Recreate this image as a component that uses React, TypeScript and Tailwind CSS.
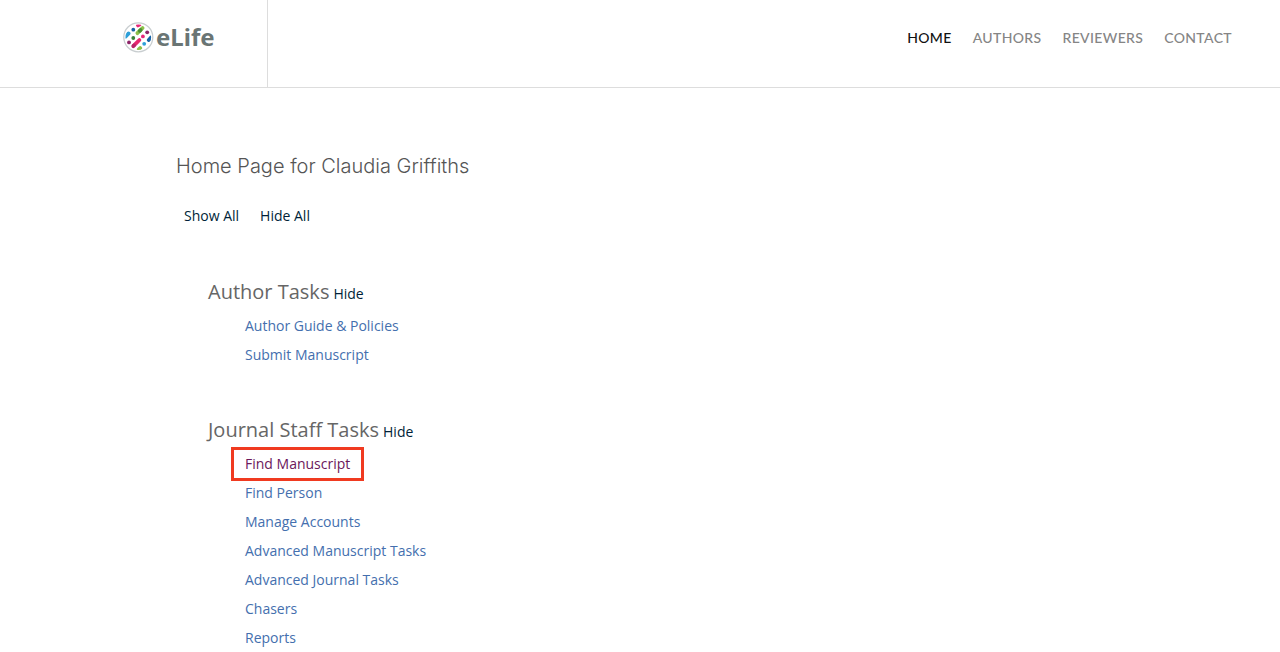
import { useState } from "react";

const navItems = ["HOME", "AUTHORS", "REVIEWERS", "CONTACT"];

type Section = { title: string; links: string[]; highlighted?: string };

const sections: Section[] = [
  { title: "Author Tasks", links: ["Author Guide & Policies", "Submit Manuscript"] },
  {
    title: "Journal Staff Tasks",
    highlighted: "Find Manuscript",
    links: [
      "Find Manuscript",
      "Find Person",
      "Manage Accounts",
      "Advanced Manuscript Tasks",
      "Advanced Journal Tasks",
      "Chasers",
      "Reports",
    ],
  },
];

function LogoMark() {
  return (
    <svg viewBox="0 0 32 32" className="size-8 shrink-0" fill="none" strokeLinecap="round" aria-hidden="true">
      <defs>
        <clipPath id="disc">
          <circle cx="16.3" cy="16.3" r="12.8" />
        </clipPath>
      </defs>
      <circle cx="16.3" cy="16.3" r="14.5" fill="#fff" stroke="#c9ced0" strokeWidth="1.3" />
      <g clipPath="url(#disc)" strokeWidth="3.8">
        <path d="M16 4.4 17.5 3.6" stroke="#e6287a" />
        <path d="M15.4 12.2 20.6 7" stroke="#8cc04b" />
        <path d="M17.8 9.8 18.6 9" stroke="#4b8f35" />
        <path d="M3.5 15.8 6.6 12.4" stroke="#2d9fd8" />
        <path d="M12 24.4 17.4 19" stroke="#e6286f" />
        <path d="M11.2 25.2 12 24.4" stroke="#b72568" />
        <path d="M26.8 19 29 16.5" stroke="#1762a5" />
        <path d="M16.8 28.4 18.2 27" stroke="#8cc04b" />
      </g>
      <circle cx="11.3" cy="8.7" r="1.9" fill="#1762a5" />
      <circle cx="25.2" cy="11.3" r="1.9" fill="#8d2468" />
      <circle cx="20.9" cy="15.4" r="1.9" fill="#e6287a" />
      <circle cx="11.3" cy="17" r="1.9" fill="#39803b" />
      <circle cx="7" cy="21.4" r="1.9" fill="#8d2468" />
      <circle cx="22.2" cy="22.8" r="1.9" fill="#2d9fd8" />
    </svg>
  );
}

function TaskSection({ section, open, onToggle }: { section: Section; open: boolean; onToggle: () => void }) {
  return (
    <section>
      <div className="flex h-[34px] items-baseline gap-1">
        <h2 className="text-xl leading-[30px] text-[#666]">{section.title}</h2>
        <button type="button" onClick={onToggle} aria-expanded={open} className="text-sm text-[#001f38]">
          {open ? "Hide" : "Show"}
        </button>
      </div>
      {open && (
        <ul className="pl-[37px]">
          {section.links.map((link) => (
            <li key={link} className="flex h-[29px] items-center">
              {link === section.highlighted ? (
                <a href="#" className="relative text-sm text-[#6b175b]">
                  {link}
                  <span className="absolute -inset-x-[14px] -inset-y-[7px] border-3 border-[#f03a20]" />
                </a>
              ) : (
                <a href="#" className="text-sm text-[#446fae]">
                  {link}
                </a>
              )}
            </li>
          ))}
        </ul>
      )}
    </section>
  );
}

export default function App() {
  const [open, setOpen] = useState<boolean[]>(sections.map(() => true));

  return (
    <div className="min-h-screen bg-white font-['Open_Sans',sans-serif]">
      <header className="flex h-[88px] border-b border-[#ddd]">
        <div className="flex w-[268px] shrink-0 items-start border-r border-[#ddd] pt-[21px] pl-[122px]">
          <a href="#" className="flex items-center gap-0.5 text-[#6a7574]">
            <LogoMark />
            <span className="font-['Noto_Sans',sans-serif] text-2xl leading-8 font-bold">eLife</span>
          </a>
        </div>
        <nav className="flex grow items-start justify-end gap-[21px] pt-7 pr-12 font-['Lato',sans-serif] text-sm font-medium tracking-wide">
          {navItems.map((item, i) => (
            <a key={item} href="#" className={i === 0 ? "text-[#111]" : "text-[#858585]"}>
              {item}
            </a>
          ))}
        </nav>
      </header>

      <main className="pt-[62px] pl-44">
        <h1 className="font-['Inter',sans-serif] text-xl leading-8 font-light text-[#555]">
          Home Page for Claudia Griffiths
        </h1>
        <div className="mt-6 flex gap-[21px] pl-2 text-sm text-[#001f38]">
          <button type="button" onClick={() => setOpen(sections.map(() => true))}>
            Show All
          </button>
          <button type="button" onClick={() => setOpen(sections.map(() => false))}>
            Hide All
          </button>
        </div>
        <div className="mt-[51px] flex flex-col gap-[46px] pl-8">
          {sections.map((section, i) => (
            <TaskSection
              key={section.title}
              section={section}
              open={open[i]}
              onToggle={() => setOpen(open.map((value, j) => (j === i ? !value : value)))}
            />
          ))}
        </div>
      </main>
    </div>
  );
}
